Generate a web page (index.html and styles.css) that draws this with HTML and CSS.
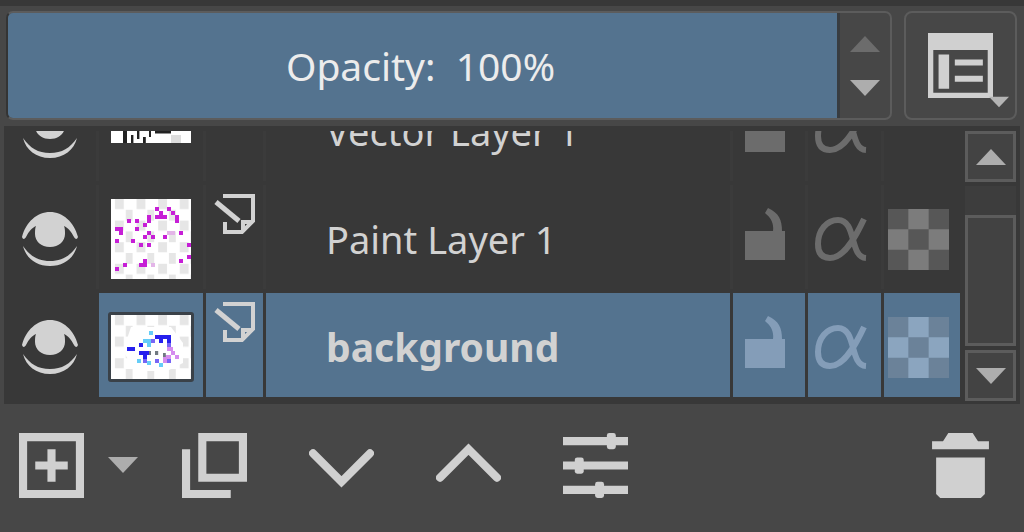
FILE: index.html
```html
<!DOCTYPE html>
<html lang="en">
<head>
  <meta charset="UTF-8">
  <meta name="viewport" content="width=device-width, initial-scale=1.0">
  <title>Layers</title>
  <link rel="stylesheet" href="styles.css">
</head>
<body>
  <!-- shared icons -->
  <svg class="defs" aria-hidden="true">
    <defs>
      <pattern id="checks" width="5.4" height="5.4" patternUnits="userSpaceOnUse">
        <rect width="5.4" height="5.4" fill="#fff"/>
        <path d="M1 0h2.200v2.500H1zM3.700 2.700h1.700v2.700H3.700z" fill="#e6e6e6"/>
      </pattern>
      <symbol id="eye" viewBox="0 0 58 56">
        <path d="M1 26C5 11 16 1 29 1s24 10 28 25c-1 3-3 2-4 0-3-6-6-9-10-11 1 2 1 5 1 8 0 7-6 13-15 13s-15-6-15-13c0-3 0-6 1-8-4 2-7 5-10 11-1 2-3 3-4 0z"/>
        <path d="M2 35c7 10 15 15 27 15s20-5 27-15c-3 12-13 20-27 20S5 47 2 35z"/>
      </symbol>
      <symbol id="paint" viewBox="0 0 42 42">
        <path d="M9 3h30v25L28 39H11V29M29 39V29h10" fill="none" stroke="currentColor" stroke-width="4"/>
        <path d="M2 9l23 19" stroke="currentColor" stroke-width="5"/>
      </symbol>
      <symbol id="lock" viewBox="0 0 42 54">
        <path d="M1 24h28c1-8-2-13-8-18l3-5c11 5 14 12 14 23h3v29H1z"/>
      </symbol>
      <symbol id="alpha" viewBox="0 0 54 46">
        <path d="M50 3C43 18 31 42 16 42 7 42 4 36 4 28 4 14 13 4 24 4c19 0 11 37 28 38" fill="none" stroke="currentColor" stroke-width="6"/>
      </symbol>
      <symbol id="checker" viewBox="0 0 3 3">
        <path class="dim" d="M0 0h3v3H0z"/>
        <path d="M1 0h1v1H1zM0 1h1v1H0zM2 1h1v1H2zM1 2h1v1H1z"/>
      </symbol>
      <symbol id="arrow-up" viewBox="0 0 30 16"><path d="M0 16L15 0l15 16z"/></symbol>
      <symbol id="arrow-down" viewBox="0 0 30 16"><path d="M0 0h30L15 16z"/></symbol>
    </defs>
  </svg>

  <div class="topbar">
    <div class="opacity">
      <div class="slider">
        <input type="range" id="opacity" min="0" max="100" value="100">
        <label for="opacity">Opacity:&nbsp; 100%</label>
      </div>
      <div class="spin">
        <button aria-label="Increase opacity" disabled><svg class="arrow"><use href="#arrow-up"/></svg></button>
        <button aria-label="Decrease opacity"><svg class="arrow"><use href="#arrow-down"/></svg></button>
      </div>
    </div>
    <button class="view-button" aria-label="Display options">
      <svg class="icon" viewBox="0 0 16 16">
        <path d="M0 0h16v16H0zM1.300 4.200v10.500h13.400V4.200z" fill-rule="evenodd"/>
        <path d="M2.600 5.300h2.600v8.400H2.600zM6.600 6.500h6.900V8H6.600zM6.600 10.500h6.900V12H6.600z"/>
      </svg>
      <svg class="corner"><use href="#arrow-down"/></svg>
    </button>
  </div>

  <div class="layers">
    <ul class="list">
      <li class="layer">
        <button class="cell" aria-label="Toggle visibility"><svg class="eye"><use href="#eye"/></svg></button>
        <div class="cell">
          <svg class="thumb" viewBox="0 0 20 6">
            <path d="M0 0h20v6H0z" fill="#fff"/>
            <path d="M3 2.500h1V6H3zM5 4h.6v2H5zM6.500 2.500h.6V5h-.6zM8 4.500h.7V6H8zM9.500 3h.5v1.500h-.5zM11 2h4v1.600h-4z" fill="#222"/>
            <path d="M15 4h2.500v2H15z" fill="#ddd"/>
          </svg>
        </div>
        <div class="cell"></div>
        <div class="cell name">Vector Layer 1</div>
        <button class="cell flag" aria-label="Lock"><svg class="lock"><use href="#lock"/></svg></button>
        <button class="cell flag" aria-label="Inherit alpha"><svg class="alpha"><use href="#alpha"/></svg></button>
        <div class="cell"></div>
      </li>
      <li class="layer">
        <button class="cell" aria-label="Toggle visibility"><svg class="eye"><use href="#eye"/></svg></button>
        <div class="cell">
          <svg class="thumb" viewBox="0 0 20 20">
            <path d="M0 0h20v20H0z" fill="url(#checks)"/>
            <path d="M1 7.500h2M2 8.500h1M4 5.500h1M6 5.500h1M6 7.500h1M8 6.500h1M9 4.500h1M9 5.500h1M11 2.500h1M12 3.500h1M11 4.500h3M14 2.500h1M15 3.500h1M16 4.500h1M16 5.500h1M1 10.500h1M5 10.500h1M7 11.500h1M9 11.500h1M8 9.500h1M9 8.500h1M10 9.500h1M13 9.500h1M17 8.500h1M19 11.500h1M19 14.500h1M17 15.500h1M8 15.500h1M7 16.500h2M3 16.500h1M1 17.500h1" stroke="#c61fd6"/>
            <path d="M14 8.500h2M10 16.500h1" stroke="#e3b5e8"/>
          </svg>
        </div>
        <div class="cell type"><svg class="paint"><use href="#paint"/></svg></div>
        <div class="cell name">Paint Layer 1</div>
        <button class="cell flag" aria-label="Lock"><svg class="lock"><use href="#lock"/></svg></button>
        <button class="cell flag" aria-label="Inherit alpha"><svg class="alpha"><use href="#alpha"/></svg></button>
        <button class="cell flag" aria-label="Lock alpha"><svg class="checker"><use href="#checker"/></svg></button>
      </li>
      <li class="layer selected">
        <button class="cell" aria-label="Toggle visibility"><svg class="eye"><use href="#eye"/></svg></button>
        <div class="cell">
          <svg class="thumb" viewBox="0 0 20 16">
            <path d="M0 0h20v16H0z" fill="url(#checks)"/>
            <path d="M5 3h10l3 4v5l-4 2H6l-3-5z" fill="#fff"/>
            <path d="M7 9.500h2.500M8 10.500h1M11 5.500h4M12 6.500h1M14 6.500h1M4 8.500h2M7 7.500h1" stroke="#2620ee"/>
            <path d="M9.500 4.500h1M8 6.500h2M9 7.500h1M6.500 11.500h1M9 12h1M12 12.500h1" stroke="#65cdf8"/>
            <path d="M10 6.500h1M14 7.500h1M8 11.500h1M11 11.500h1M14 11.500h1" stroke="#7765f5"/>
            <path d="M14 8.500h1M15 9.500h1M13 10.500h2M16 10.500h1M13 11.500h1M15 8.500h.5" stroke="#d58bee"/>
            <path d="M11 9.500h.8M9.500 9.500h.5M13 10h.7" stroke="#707880"/>
          </svg>
        </div>
        <div class="cell type"><svg class="paint"><use href="#paint"/></svg></div>
        <div class="cell name">background</div>
        <button class="cell flag" aria-label="Lock"><svg class="lock"><use href="#lock"/></svg></button>
        <button class="cell flag" aria-label="Inherit alpha"><svg class="alpha"><use href="#alpha"/></svg></button>
        <button class="cell flag" aria-label="Lock alpha"><svg class="checker"><use href="#checker"/></svg></button>
      </li>
    </ul>
    <div class="scrollbar">
      <button class="scroll-button" aria-label="Scroll up"><svg class="arrow"><use href="#arrow-up"/></svg></button>
      <div class="track"><div class="handle"></div></div>
      <button class="scroll-button" aria-label="Scroll down"><svg class="arrow"><use href="#arrow-down"/></svg></button>
    </div>
  </div>

  <div class="toolbar">
    <div class="add-group">
      <button aria-label="Add layer">
        <svg class="icon" viewBox="0 0 16 16"><path d="M0 0h16v16H0zM2 2v12h12V2zM7 4h2v3h3v2H9v3H7V9H4V7h3z" fill-rule="evenodd"/></svg>
      </button>
      <button aria-label="Layer types"><svg class="arrow"><use href="#arrow-down"/></svg></button>
    </div>
    <button class="tool" aria-label="Duplicate layer">
      <svg class="icon" viewBox="0 0 16 16"><path d="M4 0h12v12H4zM6 2v8h8V2zM0 4h2v10h10v2H0z" fill-rule="evenodd"/></svg>
    </button>
    <button class="tool" aria-label="Move layer down">
      <svg class="icon line" viewBox="0 0 16 16"><path d="M1 5l7 7 7-7"/></svg>
    </button>
    <button class="tool" aria-label="Move layer up">
      <svg class="icon line" viewBox="0 0 16 16"><path d="M1 11l7-7 7 7"/></svg>
    </button>
    <button class="tool" aria-label="Layer properties">
      <svg class="icon" viewBox="0 0 16 16">
        <path d="M0 1h16v2H0zM0 7h16v2H0zM0 13h16v2H0z"/>
        <rect x="10.800" y="0" width="2.200" height="4" rx=".6"/>
        <rect x="2.900" y="6" width="2.200" height="4" rx=".6"/>
        <rect x="7.900" y="12" width="2.200" height="4" rx=".6"/>
      </svg>
    </button>
    <button class="tool delete" aria-label="Delete layer">
      <svg class="icon" viewBox="0 0 16 16"><path d="M5 0h6l1.300 2H15v2H1V2h2.700zM2 6h12v9l-1 1H3l-1-1z"/></svg>
    </button>
  </div>
</body>
</html>
```
FILE: styles.css
```css
* {
  box-sizing: border-box;
}

body {
  margin: 0;
  height: 100vh;
  display: flex;
  flex-direction: column;
  background-color: #474747;
  border-top: 6px solid #383838;
  color: #d2d2d2;
  font-family: "Noto Sans", Verdana, sans-serif;
  font-size: 38px;
  line-height: 52px;
}

button {
  display: flex;
  align-items: center;
  justify-content: center;
  margin: 0;
  padding: 0;
  border: none;
  background: none;
  color: inherit;
}

svg {
  display: block;
  fill: currentColor;
}

.defs {
  position: absolute;
  width: 0;
  height: 0;
}

.icon {
  width: 65px;
  height: 65px;
}

.icon.line {
  fill: none;
  stroke: currentColor;
  stroke-width: 2;
  stroke-linecap: round;
}

.arrow {
  width: 30px;
  height: 16px;
  color: #adadad;
}

/* opacity slider */
.topbar {
  display: flex;
  gap: 12px;
  padding: 5px 7px 6px 6px;
}

.opacity {
  flex: 1;
  display: flex;
  height: 109px;
  border: 2px solid #5c5c5c;
  border-left-color: #343434;
  border-radius: 7px;
  overflow: hidden;
}

.slider {
  flex: 1;
  display: grid;
  align-items: center;
  border-right: 3px solid #383c40;
}

.slider input,
.slider label {
  grid-area: 1 / 1;
}

.slider input {
  appearance: none;
  width: 100%;
  height: 100%;
  margin: 0;
  background-color: #54738f;
}

.slider input::-webkit-slider-thumb {
  appearance: none;
  width: 1px;
  height: 1px;
}

.slider label {
  padding-right: 4px;
  text-align: center;
  font-size: 39px;
  color: #ececec;
  pointer-events: none;
}

.spin {
  width: 50px;
  display: flex;
  flex-direction: column;
  justify-content: center;
  align-items: center;
  gap: 28px;
}

.spin button:disabled .arrow {
  color: #6c6c6c;
}

.view-button {
  position: relative;
  width: 113px;
  height: 109px;
  border: 2px solid #5c5c5c;
  border-radius: 8px;
  color: #d0d0d0;
}

.corner {
  position: absolute;
  right: 6px;
  bottom: 10px;
  width: 20px;
  height: 12px;
  color: #b4b4b4;
}

/* layer list */
.layers {
  flex: 1;
  min-height: 0;
  display: flex;
  gap: 5px;
  margin: 0 4px;
  padding: 5px 4px 3px 0;
  background-color: #383838;
}

.list {
  flex: 1;
  display: flex;
  flex-direction: column;
  justify-content: flex-end;
  gap: 4px;
  margin: 0;
  padding: 0 0 4px;
  list-style: none;
  overflow: hidden;
}

.layer {
  flex: none;
  display: grid;
  grid-template-columns: 92px 104px 57px 1fr 72px 73px 76px;
  gap: 3px;
  height: 104px;
  background-color: #3b3b3b;
}

.cell {
  display: flex;
  align-items: center;
  justify-content: center;
  padding-top: 4px;
  background-color: #383838;
}

.layer.selected {
  background-color: #383838;
}

.selected .cell:not(:first-child) {
  background-color: #54738f;
}

.name {
  justify-content: flex-start;
  padding-left: 60px;
  white-space: nowrap;
}

.selected .name {
  font-size: 39px;
  font-weight: bold;
}

.type {
  align-items: flex-start;
  padding-top: 8px;
}

.flag {
  padding-right: 8px;
  color: #6c6c6c;
}

.selected .flag {
  color: #849db8;
}

.eye {
  width: 58px;
  height: 56px;
}

.thumb {
  width: 80px;
}

.selected .thumb {
  box-sizing: content-box;
  border: 3px solid #3a4148;
  border-radius: 3px;
}

.paint {
  width: 42px;
  height: 42px;
}

.lock {
  width: 42px;
  height: 54px;
  margin-bottom: 10px;
}

.alpha {
  width: 54px;
  height: 46px;
}

.checker {
  --dim: #575757;
  width: 61px;
  height: 61px;
  color: #7c7c7c;
}

.selected .checker {
  --dim: #6b8299;
  color: #8ba5bf;
}

.dim {
  fill: var(--dim);
}

.scrollbar {
  width: 51px;
  display: flex;
  flex-direction: column;
  gap: 4px;
}

.scroll-button {
  height: 51px;
  border: 3px solid #5c5c5c;
  background-color: #434343;
}

.track {
  flex: 1;
  display: flex;
  flex-direction: column;
  justify-content: flex-end;
  background-color: #3d3d3d;
}

.handle {
  height: 82%;
  border: 3px solid #5c5c5c;
  background-color: #424242;
}

/* bottom toolbar */
.toolbar {
  display: flex;
  align-items: center;
  height: 128px;
  padding-bottom: 6px;
  color: #d0d0d0;
}

.add-group {
  display: flex;
  gap: 24px;
  padding: 0 13px 0 19px;
}

.tool {
  width: 127px;
}

.delete {
  margin-left: auto;
}
```
